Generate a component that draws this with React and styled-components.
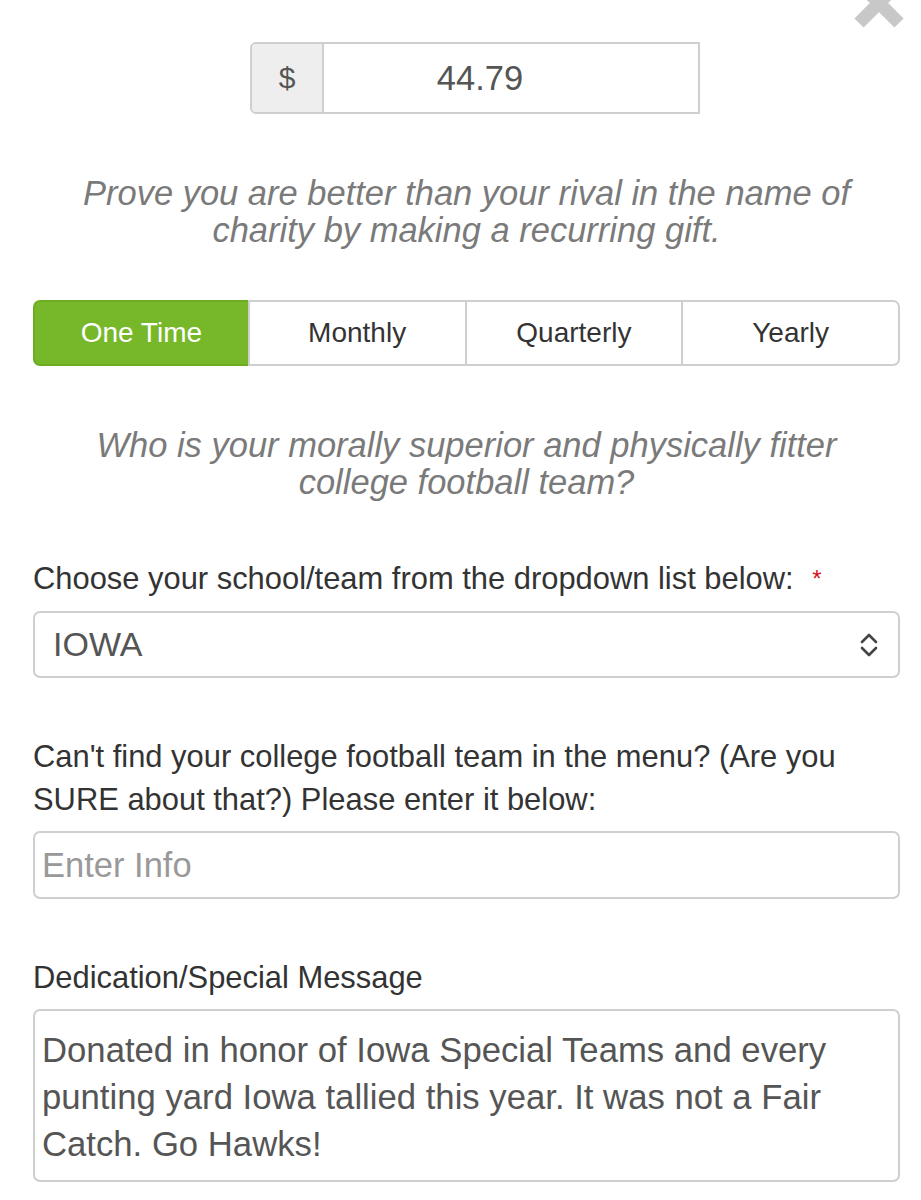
import React from "react";
import styled, { createGlobalStyle } from "styled-components";

const GlobalStyle = createGlobalStyle`
  body {
    margin: 0;
    background: #fff;
    font-family: "Liberation Sans", Arial, sans-serif;
  }
`;

const frequencies = ["One Time", "Monthly", "Quarterly", "Yearly"];

const App = () => {
  return (
    <Page>
      <GlobalStyle />
      <CloseBtn>
        <svg width="56" height="56" viewBox="0 0 56 56">
          <path d="M8 8 L48 48 M48 8 L8 48" stroke="#c8c8c8" strokeWidth="13" />
        </svg>
      </CloseBtn>

      <AmountGroup>
        <Addon>$</Addon>
        <AmountInput>44.79</AmountInput>
      </AmountGroup>

      <Lead>
        Prove you are better than your rival in the name of
        <br />
        charity by making a recurring gift.
      </Lead>

      <BtnGroup>
        {frequencies.map((f, i) => (
          <FreqBtn key={f} active={i === 0}>
            {f}
          </FreqBtn>
        ))}
      </BtnGroup>

      <Question>
        Who is your morally superior and physically fitter
        <br />
        college football team?
      </Question>

      <Label top={56}>
        Choose your school/team from the dropdown list below: <Req>*</Req>
      </Label>
      <Select>
        IOWA
        <svg width="22" height="26" viewBox="0 0 22 26">
          <path
            d="M4 10 L11 3 L18 10 M4 16 L11 23 L18 16"
            fill="none"
            stroke="#444"
            strokeWidth="2.6"
            strokeLinecap="round"
            strokeLinejoin="round"
          />
        </svg>
      </Select>

      <Label top={57}>
        Can't find your college football team in the menu? (Are you
        <br />
        SURE about that?) Please enter it below:
      </Label>
      <Field placeholder="Enter Info" />

      <Label top={57}>Dedication/Special Message</Label>
      <TextArea>
        Donated in honor of Iowa Special Teams and every
        <br />
        punting yard Iowa tallied this year. It was not a Fair
        <br />
        Catch. Go Hawks!
      </TextArea>
    </Page>
  );
};

const Page = styled.div`
  position: relative;
  width: 921px;
  box-sizing: border-box;
  padding: 42px 21px 40px 33px;
  overflow: hidden;
`;

const CloseBtn = styled.div`
  position: absolute;
  top: -25px;
  right: 14px;
`;

const AmountGroup = styled.div`
  display: flex;
  width: 450px;
  height: 72px;
  margin-left: 217px;
  box-sizing: border-box;
  border: 2px solid #cfcfcf;
  border-radius: 6px 0 0 6px;
  overflow: hidden;
`;

const Addon = styled.div`
  width: 70px;
  background: #eeeeee;
  border-right: 2px solid #cfcfcf;
  display: flex;
  align-items: center;
  justify-content: center;
  font-size: 30px;
  color: #555;
`;

const AmountInput = styled.div`
  flex: 1;
  display: flex;
  align-items: center;
  justify-content: center;
  padding-right: 62px;
  font-size: 34.5px;
  color: #555;
  background: #fff;
`;

const Lead = styled.p`
  margin: 61px 0 0;
  text-align: center;
  font-style: italic;
  font-size: 34.5px;
  line-height: 37px;
  color: #7a7a7a;
`;

const BtnGroup = styled.div`
  display: grid;
  grid-template-columns: repeat(4, 1fr);
  margin-top: 51px;
  height: 66px;
`;

const FreqBtn = styled.div`
  display: flex;
  align-items: center;
  justify-content: center;
  font-size: 28px;
  box-sizing: border-box;
  color: ${(p) => (p.active ? "#fff" : "#333")};
  background: ${(p) => (p.active ? "#77b82b" : "#fff")};
  border: 2px solid ${(p) => (p.active ? "#6dad22" : "#cfcfcf")};
  margin-left: -2px;
  &:first-child {
    margin-left: 0;
    border-radius: 7px 0 0 7px;
  }
  &:last-child {
    border-radius: 0 7px 7px 0;
  }
`;

const Question = styled(Lead)`
  margin-top: 61px;
`;

const Label = styled.div`
  margin-top: ${(p) => p.top}px;
  font-size: 30.9px;
  line-height: 43px;
  color: #333;
`;

const Req = styled.span`
  color: #d9121f;
  font-size: 24px;
  vertical-align: top;
  margin-left: 10px;
`;

const Select = styled.div`
  margin-top: 11px;
  height: 67px;
  box-sizing: border-box;
  border: 2px solid #cfcfcf;
  border-radius: 7px;
  display: flex;
  align-items: center;
  justify-content: space-between;
  padding: 0 18px 0 18px;
  font-size: 34px;
  color: #555;
`;

const Field = styled.input`
  display: block;
  width: 100%;
  margin-top: 10px;
  height: 68px;
  box-sizing: border-box;
  border: 2px solid #cfcfcf;
  border-radius: 7px;
  padding: 0 7px;
  font-family: "Liberation Sans", Arial, sans-serif;
  font-size: 34.5px;
  color: #555;
  &::placeholder {
    color: #999;
  }
`;

const TextArea = styled.div`
  margin-top: 10px;
  height: 173px;
  box-sizing: border-box;
  border: 2px solid #cfcfcf;
  border-radius: 7px;
  padding: 16px 7px;
  font-size: 34.7px;
  line-height: 47px;
  color: #555;
`;

export default App;
